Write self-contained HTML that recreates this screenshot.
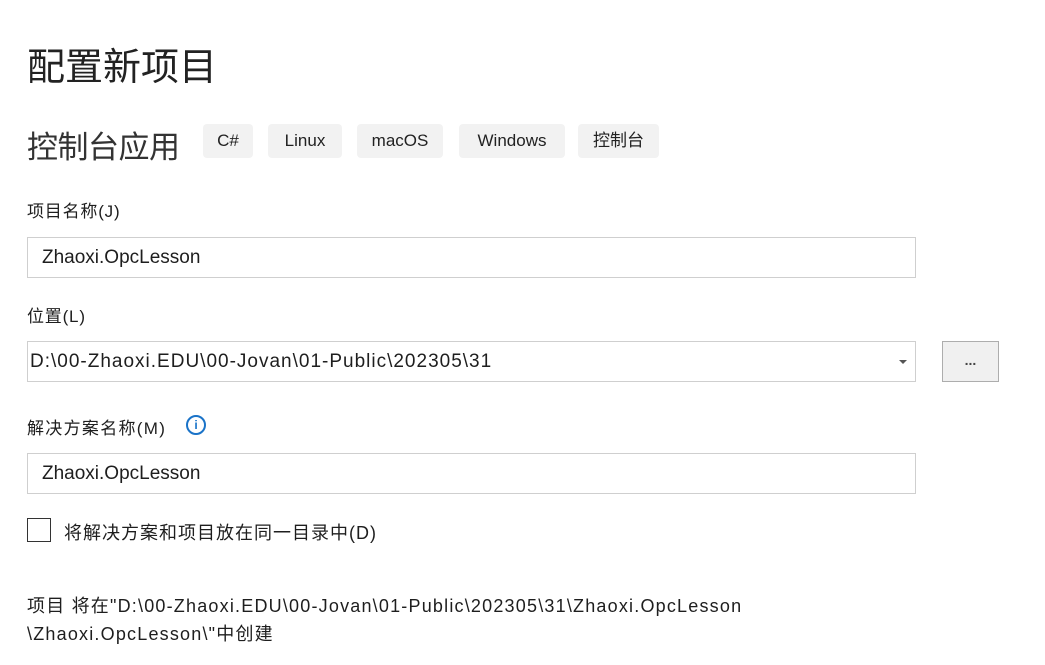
<!DOCTYPE html>
<html><head><meta charset="utf-8"><style>
body{margin:0;width:1045px;height:665px;background:#fff;font-family:"Liberation Sans","Noto Sans CJK SC",sans-serif;color:#1e1e1e;position:relative;overflow:hidden}
.a{position:absolute;white-space:nowrap}
.tag{position:absolute;top:124px;height:34px;background:#f2f2f2;border-radius:4px;font-size:17px;line-height:34px;text-align:center;color:#222}
.inp{position:absolute;left:27px;width:887px;height:39px;border:1px solid #cfcfcf;font-size:19px;line-height:39px;box-sizing:content-box}
.inp span{margin-left:14px}
.lbl{font-size:17px;letter-spacing:0.8px}
</style></head><body>
<div class="a" style="left:27px;top:36px;font-size:38px;color:#222">配置新项目</div>
<div class="a" style="left:27px;top:122px;font-size:31px;color:#333;letter-spacing:-0.5px">控制台应用</div>
<div class="tag" style="left:203px;width:50px">C#</div>
<div class="tag" style="left:268px;width:74px">Linux</div>
<div class="tag" style="left:357px;width:86px">macOS</div>
<div class="tag" style="left:459px;width:106px">Windows</div>
<div class="tag" style="left:578px;width:81px">控制台</div>
<div class="a lbl" style="left:27px;top:197px">项目名称(J)</div>
<div class="inp" style="top:237px"><span>Zhaoxi.OpcLesson</span></div>
<div class="a lbl" style="left:27px;top:302px">位置(L)</div>
<div class="inp" style="top:341px"><span style="margin-left:2px;font-size:19px;letter-spacing:1px">D:\00-Zhaoxi.EDU\00-Jovan\01-Public\202305\31</span>
<div style="position:absolute;right:8px;top:18px;width:0;height:0;border-left:4px solid transparent;border-right:4px solid transparent;border-top:4px solid #555"></div></div>
<div class="a" style="left:942px;top:341px;width:55px;height:39px;background:#f0f0f0;border:1px solid #adadad;text-align:center;line-height:36px;font-size:14px;font-weight:bold;color:#444">...</div>
<div class="a" style="left:27px;top:414px;font-size:17px;letter-spacing:1.3px">解决方案名称(M)</div>
<div class="a" style="left:186px;top:415px;width:16px;height:16px;border:2px solid #1a73c8;border-radius:50%;color:#1a73c8;font-size:12px;font-weight:bold;text-align:center;line-height:16px">i</div>
<div class="inp" style="top:453px"><span>Zhaoxi.OpcLesson</span></div>
<div class="a" style="left:27px;top:518px;width:22px;height:22px;border:1px solid #333"></div>
<div class="a" style="left:64px;top:519px;font-size:18px;letter-spacing:1px">将解决方案和项目放在同一目录中(D)</div>
<div class="a" style="left:27px;top:592px;font-size:18px;letter-spacing:1.2px">项目 将在"D:\00-Zhaoxi.EDU\00-Jovan\01-Public\202305\31\Zhaoxi.OpcLesson</div>
<div class="a" style="left:27px;top:620px;font-size:18px;letter-spacing:1.2px">\Zhaoxi.OpcLesson\"中创建</div>
</body></html>
